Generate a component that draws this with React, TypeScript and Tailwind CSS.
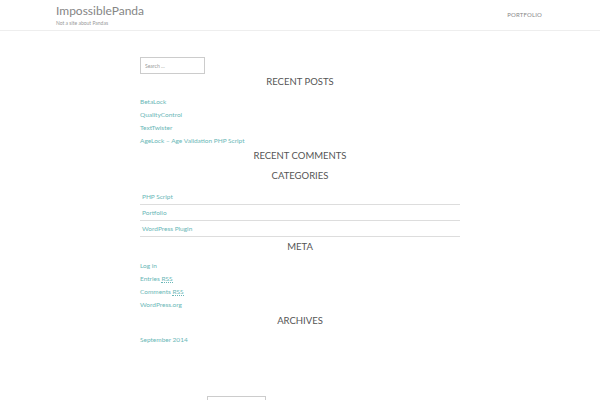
export default function App() {
  const posts = ['BetaLock', 'QualityControl', 'TextTwister', 'AgeLock – Age Validation PHP Script'];
  const cats = ['PHP Script', 'Portfolio', 'WordPress Plugin'];

  return (
    <div className="h-[400px] bg-white font-['Lato','Open_Sans',sans-serif] overflow-hidden">
      {/* header */}
      <header className="h-[31px] border-b border-[#eeeeee] flex items-start justify-between pl-[56px] pr-[58px]">
        <div className="pt-[3px]">
          <div className="text-[12px] leading-[16px] text-[#858585]">ImpossiblePanda</div>
          <div className="text-[5px] leading-[6px] text-[#999] mt-[1px]">Not a site about Pandas</div>
        </div>
        <nav className="pt-[11px] text-[6px] leading-[8px] text-[#888] tracking-wide">PORTFOLIO</nav>
      </header>

      <main className="w-[320px] mx-auto pt-[26px]">
        <input
          type="text"
          placeholder="Search …"
          className="block w-[65px] h-[17px] border border-[#cccccc] px-[4px] text-[5px] placeholder:text-[#999] outline-none"
        />

        <h2 className="text-center text-[9.5px] leading-[14px] text-[#555] mt-[1px]">RECENT POSTS</h2>
        <ul className="mt-[6px]">
          {posts.map((p) => (
            <li key={p} className="text-[6.5px] leading-[13px] text-[#6ab7b7]">{p}</li>
          ))}
        </ul>

        <h2 className="text-center text-[9.5px] leading-[14px] text-[#555] mt-[2px]">RECENT COMMENTS</h2>
        <h2 className="text-center text-[9.5px] leading-[14px] text-[#555] mt-[6px]">CATEGORIES</h2>
        <ul className="mt-[6px]">
          {cats.map((c) => (
            <li key={c} className="border-b border-[#dddddd] pl-[2px] text-[6.5px] leading-[15px] text-[#6ab7b7]">{c}</li>
          ))}
        </ul>

        <h2 className="text-center text-[9.5px] leading-[14px] text-[#555] mt-[3px]">META</h2>
        <ul className="mt-[5px]">
          <li className="text-[6.5px] leading-[13px] text-[#6ab7b7]">Log in</li>
          <li className="text-[6.5px] leading-[13px] text-[#6ab7b7]">
            Entries <abbr className="no-underline border-b border-dotted border-[#6ab7b7]">RSS</abbr>
          </li>
          <li className="text-[6.5px] leading-[13px] text-[#6ab7b7]">
            Comments <abbr className="no-underline border-b border-dotted border-[#6ab7b7]">RSS</abbr>
          </li>
          <li className="text-[6.5px] leading-[13px] text-[#6ab7b7]">WordPress.org</li>
        </ul>

        <h2 className="text-center text-[9.5px] leading-[14px] text-[#555] mt-[3px]">ARCHIVES</h2>
        <ul className="mt-[5px]">
          <li className="text-[6.5px] leading-[13px] text-[#6ab7b7]">September 2014</li>
        </ul>

        <div className="mt-[50px] ml-[67px] w-[59px] h-[20px] border border-[#cccccc]" />
      </main>
    </div>
  );
}
